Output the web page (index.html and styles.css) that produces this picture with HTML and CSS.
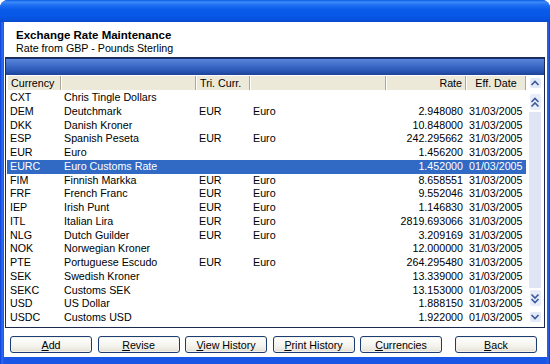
FILE: index.html
```html
<!DOCTYPE html>
<html>
<head>
<meta charset="utf-8">
<link rel="stylesheet" href="styles.css">
</head>
<body>
<div class="window">
  <div class="titlebar"></div>
  <div class="client">
    <div class="header">
      <div class="title">Exchange Rate Maintenance</div>
      <div class="subtitle">Rate from GBP - Pounds Sterling</div>
    </div>
    <div class="panel">
      <div class="bar"></div>
      <div class="colhead">
        <div class="hc">Currency</div>
        <div class="hc"></div>
        <div class="hc">Tri. Curr.</div>
        <div class="hc"></div>
        <div class="hc right">Rate</div>
        <div class="hc center">Eff. Date</div>
        <div class="hscroll">
          <span class="abox"><svg width="10" height="8" viewBox="0 0 10 8"><polyline points="1.5,6 5,2.5 8.5,6" class="chev"/></svg></span>
        </div>
      </div>
      <div class="body">
        <div class="rows">
          <div class="row"><span>CXT</span><span>Chris Tingle Dollars</span><span></span><span></span><span class="right"></span><span></span></div>
          <div class="row"><span>DEM</span><span>Deutchmark</span><span>EUR</span><span>Euro</span><span class="right">2.948080</span><span>31/03/2005</span></div>
          <div class="row"><span>DKK</span><span>Danish Kroner</span><span></span><span></span><span class="right">10.848000</span><span>31/03/2005</span></div>
          <div class="row"><span>ESP</span><span>Spanish Peseta</span><span>EUR</span><span>Euro</span><span class="right">242.295662</span><span>31/03/2005</span></div>
          <div class="row"><span>EUR</span><span>Euro</span><span></span><span></span><span class="right">1.456200</span><span>31/03/2005</span></div>
          <div class="row selected"><span>EURC</span><span>Euro Customs Rate</span><span></span><span></span><span class="right">1.452000</span><span>01/03/2005</span></div>
          <div class="row"><span>FIM</span><span>Finnish Markka</span><span>EUR</span><span>Euro</span><span class="right">8.658551</span><span>31/03/2005</span></div>
          <div class="row"><span>FRF</span><span>French Franc</span><span>EUR</span><span>Euro</span><span class="right">9.552046</span><span>31/03/2005</span></div>
          <div class="row"><span>IEP</span><span>Irish Punt</span><span>EUR</span><span>Euro</span><span class="right">1.146830</span><span>31/03/2005</span></div>
          <div class="row"><span>ITL</span><span>Italian Lira</span><span>EUR</span><span>Euro</span><span class="right">2819.693066</span><span>31/03/2005</span></div>
          <div class="row"><span>NLG</span><span>Dutch Guilder</span><span>EUR</span><span>Euro</span><span class="right">3.209169</span><span>31/03/2005</span></div>
          <div class="row"><span>NOK</span><span>Norwegian Kroner</span><span></span><span></span><span class="right">12.000000</span><span>31/03/2005</span></div>
          <div class="row"><span>PTE</span><span>Portuguese Escudo</span><span>EUR</span><span>Euro</span><span class="right">264.295480</span><span>31/03/2005</span></div>
          <div class="row"><span>SEK</span><span>Swedish Kroner</span><span></span><span></span><span class="right">13.339000</span><span>31/03/2005</span></div>
          <div class="row"><span>SEKC</span><span>Customs SEK</span><span></span><span></span><span class="right">13.153000</span><span>01/03/2005</span></div>
          <div class="row"><span>USD</span><span>US Dollar</span><span></span><span></span><span class="right">1.888150</span><span>31/03/2005</span></div>
          <div class="row"><span>USDC</span><span>Customs USD</span><span></span><span></span><span class="right">1.922000</span><span>01/03/2005</span></div>
        </div>
        <div class="scroll">
          <span class="dbl"><svg width="10" height="13" viewBox="0 0 10 13"><polyline points="1.5,6 5,2.5 8.5,6" class="chev"/><polyline points="1.5,10.5 5,7 8.5,10.5" class="chev"/></svg></span>
          <span class="track"></span>
          <span class="dbl"><svg width="10" height="13" viewBox="0 0 10 13"><polyline points="1.5,2.5 5,6 8.5,2.5" class="chev"/><polyline points="1.5,7 5,10.5 8.5,7" class="chev"/></svg></span>
          <span class="abox low"><svg width="10" height="8" viewBox="0 0 10 8"><polyline points="1.5,2 5,5.5 8.5,2" class="chev"/></svg></span>
        </div>
      </div>
    </div>
    <div class="buttons">
      <button class="btn"><u>A</u>dd</button>
      <button class="btn"><u>R</u>evise</button>
      <button class="btn"><u>V</u>iew History</button>
      <button class="btn"><u>P</u>rint History</button>
      <button class="btn"><u>C</u>urrencies</button>
      <button class="btn back"><u>B</u>ack</button>
    </div>
  </div>
</div>
</body>
</html>
```

FILE: styles.css
```css
html, body {
  margin: 0;
  padding: 0;
  background: #ffffff;
}
body {
  width: 550px;
  height: 364px;
  overflow: hidden;
  font-family: "Liberation Sans", Arial, sans-serif;
  font-size: 10.7px;
  color: #000;
}
.window {
  width: 550px;
  height: 364px;
  display: flex;
  flex-direction: column;
  background: linear-gradient(90deg, #0a3fd6 0px, #2d6cf0 2px, #1a56e6 4px, #1a56e6 546px, #2a63e8 548px, #0c3cc8 550px);
  border-radius: 8px 8px 0 0;
}
.titlebar {
  height: 22px;
  flex: none;
  border-radius: 8px 8px 0 0;
  background: linear-gradient(180deg, #0a5ae8 0px, #3d8cf8 2px, #1f6ef2 5px, #0a5ae8 10px, #0758e6 16px, #0650dc 20px, #0a48c8 22px);
}
.client {
  flex: 1;
  margin: 0 3px 7px 4px;
  background: #ffffff;
  display: flex;
  flex-direction: column;
}
.header {
  padding: 7px 0 1px 12px;
  height: 27px;
}
.title {
  font-weight: bold;
  font-size: 11.5px;
  line-height: 13px;
}
.subtitle {
  line-height: 13px;
}
.panel {
  margin: 0 2px 0 1px;
  height: 269px;
  border: 1px solid #1b2a4e;
  display: flex;
  flex-direction: column;
}
.bar {
  height: 16px;
  flex: none;
  border-top: 1px solid #142f78;
  background: linear-gradient(180deg, #5a86d8 0%, #3e6cc8 40%, #2a56b4 75%, #1d4298 100%);
}
.colhead {
  margin-top: 1px;
  height: 14px;
  flex: none;
  display: grid;
  grid-template-columns: 55px 135px 54px 136px 80px 60px 18px;
  line-height: 14px;
}
.hc {
  background: #ece9d8;
  border-left: 1px solid #ffffff;
  border-right: 1px solid #aca899;
  padding: 0 3px;
  white-space: nowrap;
  overflow: hidden;
}
.hc:first-child {
  margin-left: 1px;
  padding-left: 3px;
}
.right {
  text-align: right;
}
.center {
  text-align: center;
}
.hscroll {
  display: flex;
  justify-content: center;
  align-items: center;
}
.abox {
  width: 11px;
  height: 10px;
  display: flex;
  align-items: center;
  justify-content: center;
  background: #e2e9f8;
  border-radius: 2px;
}
.chev {
  fill: none;
  stroke: #3c5a9a;
  stroke-width: 1.6;
}
.body {
  flex: 1;
  display: flex;
  padding-top: 1px;
}
.rows {
  width: 519px;
  margin-left: 1px;
}
.row {
  display: grid;
  grid-template-columns: 54px 135px 54px 136px 80px 60px;
  height: 13.75px;
  line-height: 13.75px;
  white-space: nowrap;
}
.row span {
  padding: 0 3px;
  overflow: hidden;
}
.row span:first-child {
  padding-left: 3px;
}
.row.selected {
  background: #316ac5;
  color: #ffffff;
}
.scroll {
  width: 18px;
  display: flex;
  flex-direction: column;
  align-items: center;
  padding-bottom: 3px;
}
.dbl {
  width: 11px;
  height: 16px;
  display: flex;
  align-items: center;
  justify-content: center;
  background: #e8edf9;
  border-radius: 2px;
  margin-top: 3px;
}
.track {
  flex: 1;
  width: 12px;
  background: #dfe5f5;
  margin-top: 2px;
}
.scroll .dbl:nth-child(3) {
  margin-top: 2px;
}
.abox.low {
  margin-top: 6px;
  margin-bottom: 2px;
}
.buttons {
  display: flex;
  gap: 5.5px;
  padding: 8px 0 0 6px;
}
.btn {
  width: 82px;
  height: 17px;
  padding: 0;
  font-family: "Liberation Sans", Arial, sans-serif;
  font-size: 10.7px;
  color: #000;
  border: 1px solid #1c3c74;
  border-radius: 3px;
  background: linear-gradient(180deg, #ffffff 0%, #f6f5f0 50%, #ebe9e0 85%, #d8d3c6 100%);
  box-shadow: inset 0 0 0 1px #f4f2ea;
}
.btn.back {
  margin-left: 7.5px;
}
```
